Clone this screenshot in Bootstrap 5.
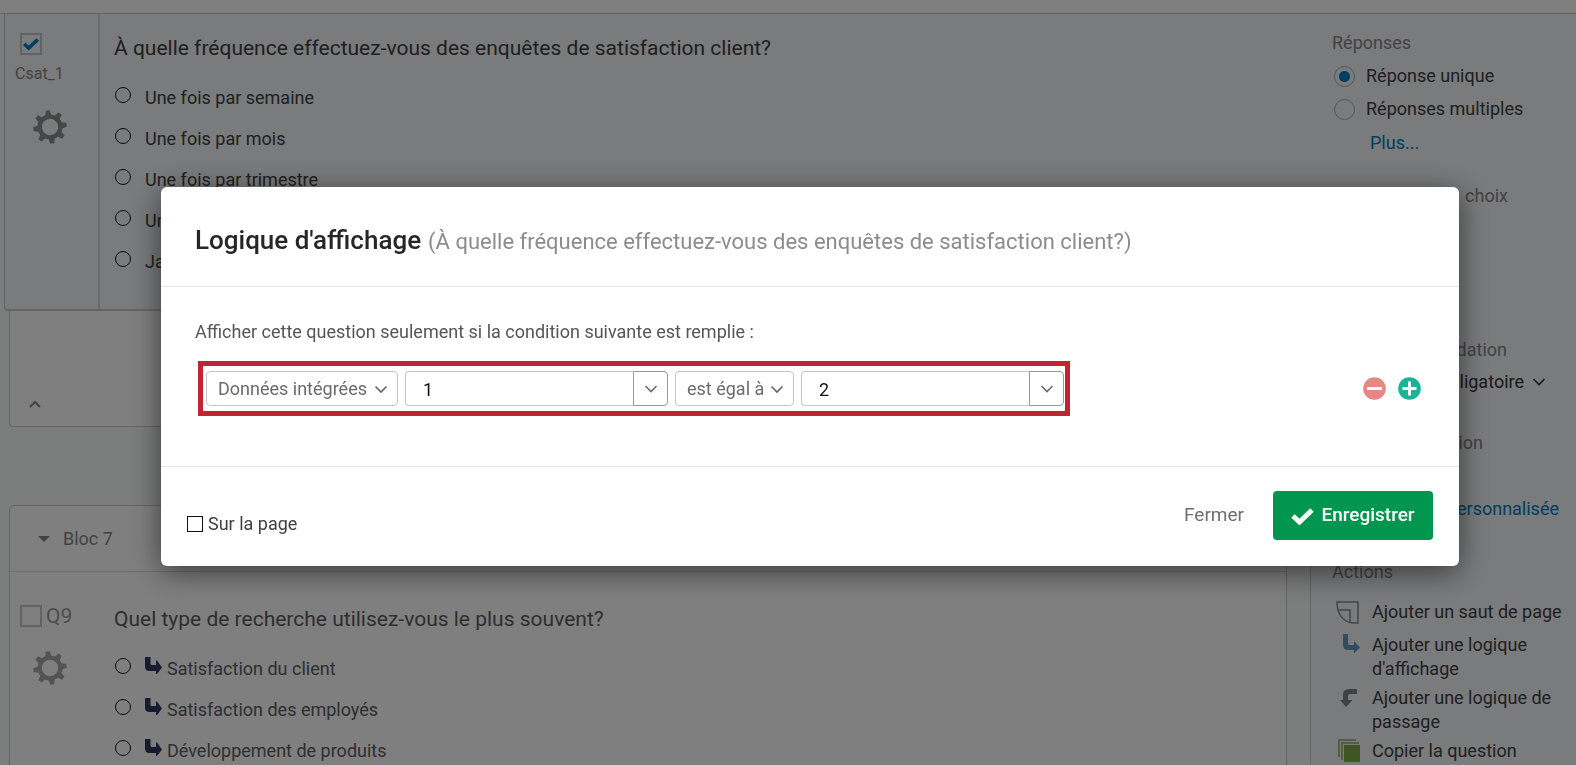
<!DOCTYPE html>
<html lang="fr">
<head>
<meta charset="utf-8">
<meta name="viewport" content="width=device-width, initial-scale=1">
<title>Logique d'affichage</title>
<link href="https://cdn.jsdelivr.net/npm/bootstrap@5.3.0/dist/css/bootstrap.min.css" rel="stylesheet">
<style>
  body { font-family: Roboto, "Liberation Sans", sans-serif; font-size: 18px; line-height: 24px; color: #404040; background: #f9fafa; height: 100vh; overflow: hidden; }
  .topstrip { height: 14px; background: #fff; border-bottom: 1px solid #cacaca; }
  .link-q { color: #007ac0; text-decoration: none; }
  .muted { color: #858585; }

  /* survey column */
  .survey { padding-left: 4px; min-width: 0; }
  .q-active { background: #f4f6f8; border: 1px solid #c8cacb; border-width: 0 0 2px 1px; border-bottom-left-radius: 4px; padding-bottom: 18px; margin-right: -1px; position: relative; }
  .q-side { width: 95px; flex: none; padding: 19px 0 0 15px; }
  .q-active .q-side { border-right: 2px solid #d2d4d5; margin-bottom: -18px; }
  .block-card { background: #fff; border: 1px solid #cacaca; margin: 0 23px 0 5px; }
  .block-end { border-top: 0; border-radius: 0 0 4px 4px; margin-bottom: 78px; padding: 80px 0 11px 16px; }
  .block-head { height: 66px; padding-left: 28px; gap: 13px; border-bottom: 1px solid #dcdcdc; }
  .q-title { font-size: 21px; line-height: 28px; margin-bottom: 24px; }
  .q-body { padding: 20px 0 0 14px; }
  .opt { height: 24px; min-height: 0; margin: 0 0 17px; padding: 0; display: flex; }
  .opt .form-check-input { width: 16px; height: 16px; margin: 1px 14px 0 1px; float: none; border: 1px solid #111; background-color: transparent; flex: none; }
  .opt svg { margin: 0 5px 0 0; flex: none; }
  .q-dim { color: #5c5c5c; }
  .box.form-check-input { width: 22px; height: 22px; margin: 0; border: 2px solid #c6c6c6; border-radius: 0; background-color: transparent; }
  .box.form-check-input:checked { background-size: 18px 18px; background-image: url("data:image/svg+xml,%3Csvg xmlns='http://www.w3.org/2000/svg' viewBox='0 0 20 20'%3E%3Cpath fill='none' stroke='%23007ac0' stroke-width='4' d='M2.5 10l5 4.5L17.5 5'/%3E%3C/svg%3E"); }
  .gear { display: block; margin: 24px 0 0 13px; padding: 0; border: 0; background: none; line-height: 0; color: #8c8c8c; }
  .csat { font-size: 16px; line-height: 24px; margin: 7px 0 0 -5px; }
  .q9 { gap: 4px; margin: 32px 0 0 10px; font-size: 21px; line-height: 24px; color: #9a9a9a; }
  .gear-9 { margin: 23px 0 0 23px; color: #a8a8a8; }
  .q9-body { padding: 33px 0 0 9px; }

  /* right panel */
  .panel { width: 266px; flex: none; background: #f4f6f8; border-left: 1px solid #cacaca; padding: 17px 0 0 21px; white-space: nowrap; }
  .panel h2 { font-size: 18px; line-height: 24px; font-weight: 400; margin: 0; color: #858585; }
  .panel-opt { margin: 9px 0 0; padding: 0; min-height: 24px; display: flex; align-items: center; gap: 11px; }
  .panel-opt .form-check-input { float: none; margin: 0 0 0 2px; width: 21px; height: 21px; border: 1px solid #aaa; background-color: transparent; }
  .panel-opt .form-check-input:checked { background-image: radial-gradient(circle, #007ac0 5px, transparent 6px); }
  .more { margin: 10px 0 0 38px; }
  .to-end { text-align: right; }
  .panel .p-choices { margin: 29px 68px 0 0; }
  .panel .p-valid { margin: 130px 69px 8px 0; }
  .panel .p-kind { margin: 37px 93px 0 0; }
  .p-custom { margin: 42px 17px 0 0; }
  .panel .p-actions { margin: 39px 0 16px; }
  .req { width: 214px; font-size: 18px; line-height: 24px; color: #333; }
  .act { display: flex; gap: 10px; margin-top: 5px; line-height: 24px; white-space: normal; color: #404040; text-decoration: none; }
  .act svg { flex: none; margin-left: 1px; }

  /* dialog */
  .modal { padding: 187px 117px 0 161px; overflow: hidden; }
  .modal-dialog { max-width: none; margin: 0; }
  .modal-content { border: 0; border-radius: 6px; box-shadow: 0 6px 30px rgba(0,0,0,.55); color: #555; }
  .modal-header { padding: 40px 34px 33px; border-color: #e6e6e6; justify-content: flex-start; gap: 7px; align-items: baseline; }
  .modal-title { font-size: 26px; line-height: 26px; font-weight: 500; color: #262626; white-space: nowrap; }
  .modal-sub { font-size: 22px; line-height: 20px; color: #8c8c8c; white-space: nowrap; }
  .modal-body { padding: 33px 35px 50px 34px; }
  .intro { margin-bottom: 17px; }
  .modal-footer { padding: 24px 26px 26px; border-color: #e6e6e6; }
  .modal-footer > * { margin: 0; }
  .rule { border: 5px solid #c32432; padding: 5px 1px 5px 3px; margin-left: 3px; gap: 7px; }
  .rule .form-select, .rule .form-control, .rule .btn { height: 35px; font-size: 18px; line-height: 24px; padding-top: 5px; padding-bottom: 4px; border-color: #c6c6c6; border-radius: 4px; color: #6b6b6b; }
  .rule .form-select { padding-left: 11px; padding-right: 28px; background-position: right 9px center; background-size: 14px 14px; background-image: url("data:image/svg+xml,%3Csvg xmlns='http://www.w3.org/2000/svg' viewBox='0 0 14 14'%3E%3Cpath fill='none' stroke='%23666' stroke-width='1.6' d='M1.500 4.500l5.500 5.500 5.500-5.500'/%3E%3C/svg%3E"); }
  .rule .sel-kind { width: 192px; }
  .rule .sel-op { width: 119px; }
  .rule .input-group { width: 263px; }
  .rule .form-control { color: #111; padding-left: 17px; border-right: 0; border-radius: 4px 0 0 4px; }
  .rule .input-group .btn { width: 35px; padding: 0; border-color: #999; line-height: 0; border-radius: 0 4px 4px 0; }
  .round { padding: 0; border: 0; background: none; line-height: 0; }
  .tools { gap: 12px; margin-right: 3px; }
  .on-page { gap: 5px; padding: 0; display: flex; align-items: center; color: #404040; margin-top: 17px; }
  .on-page .form-check-input { margin: 0 0 1px; float: none; width: 16px; height: 16px; border: 1px solid #111; border-radius: 0; }
  .btn-fermer { font-size: 19px; color: #6e6e6e; padding: 0 4px; }
  .btn-save { height: 49px; width: 160px; font-size: 19px; font-weight: 500; padding: 0; background: #009650; color: #fff; border: 0; border-radius: 4px; margin-left: 24px; gap: 7px; }
</style>
</head>
<body>
<svg width="0" height="0" class="position-absolute" aria-hidden="true">
  <symbol id="i-gear" viewBox="0 0 34 34"><g fill="currentColor" transform="rotate(-8 17 17)"><path fill-rule="evenodd" d="M17 4.500a12.500 12.500 0 1 0 0 25a12.500 12.500 0 1 0 0-25zM17 8.800a8.200 8.200 0 1 1 0 16.400a8.200 8.200 0 1 1 0-16.400z"/><path d="M13.800 6l1.200-5.700h4l1.200 5.700zM13.800 28l1.200 5.700h4l1.200-5.700zM6 13.800l-5.700 1.200v4l5.700 1.200zM28 13.800l5.700 1.200v4l-5.700 1.200z"/><path transform="rotate(45 17 17)" d="M13.800 6l1.200-5.700h4l1.200 5.700zM13.800 28l1.200 5.700h4l1.200-5.700zM6 13.800l-5.700 1.200v4l5.700 1.200zM28 13.800l5.700 1.200v4l-5.700 1.200z"/></g></symbol>
  <symbol id="i-branch" viewBox="0 0 17 18"><path fill="currentColor" d="M0 0h5.500v6.500q0 1.500 1.500 1.500h4V3.500h1l5 7-5 6.500h-1V14H4.500Q0 14 0 9.500z"/></symbol>
  <symbol id="i-down" viewBox="0 0 14 14"><path fill="none" stroke="currentColor" stroke-width="1.600" d="M1.500 4l5.500 5.500 5.500-5.500"/></symbol>
</svg>

<div class="topstrip"></div>
<div class="d-flex align-items-stretch">
  <main class="survey flex-grow-1">
    <section class="q-active d-flex">
      <div class="q-side">
        <input class="form-check-input box d-block" type="checkbox" id="csat" checked>
        <label class="muted csat d-block" for="csat">Csat_1</label>
        <button class="gear" aria-label="Options de la question"><svg width="34" height="34"><use href="#i-gear"/></svg></button>
      </div>
      <div class="q-body">
        <div class="q-title">À quelle fréquence effectuez-vous des enquêtes de satisfaction client?</div>
        <div class="form-check opt"><input class="form-check-input" type="radio" name="f" id="f1"><label for="f1">Une fois par semaine</label></div>
        <div class="form-check opt"><input class="form-check-input" type="radio" name="f" id="f2"><label for="f2">Une fois par mois</label></div>
        <div class="form-check opt"><input class="form-check-input" type="radio" name="f" id="f3"><label for="f3">Une fois par trimestre</label></div>
        <div class="form-check opt"><input class="form-check-input" type="radio" name="f" id="f4"><label for="f4">Une fois par an</label></div>
        <div class="form-check opt"><input class="form-check-input" type="radio" name="f" id="f5"><label for="f5">Jamais</label></div>
      </div>
    </section>
    <section class="block-card block-end muted"><svg width="18" height="18" viewBox="0 0 18 18"><path fill="none" stroke="currentColor" stroke-width="2" d="M4 12l5-5 5 5"/></svg></section>
    <section class="block-card rounded-top q-dim">
      <div class="block-head d-flex align-items-center muted"><svg width="12" height="6"><path fill="currentColor" d="M0 0h12L6 6z"/></svg><span>Bloc 7</span></div>
      <div class="d-flex">
        <div class="q-side ps-0 pt-0">
          <div class="q9 d-flex align-items-center"><input class="form-check-input box" type="checkbox" id="q9"><label for="q9">Q9</label></div>
          <button class="gear gear-9" aria-label="Options de la question"><svg width="34" height="34"><use href="#i-gear"/></svg></button>
        </div>
        <div class="q9-body">
          <div class="q-title">Quel type de recherche utilisez-vous le plus souvent?</div>
          <div class="form-check opt"><input class="form-check-input" type="radio" name="r" id="r1"><svg width="17" height="18" color="#303561"><use href="#i-branch"/></svg><label for="r1">Satisfaction du client</label></div>
          <div class="form-check opt"><input class="form-check-input" type="radio" name="r" id="r2"><svg width="17" height="18" color="#303561"><use href="#i-branch"/></svg><label for="r2">Satisfaction des employés</label></div>
          <div class="form-check opt"><input class="form-check-input" type="radio" name="r" id="r3"><svg width="17" height="18" color="#303561"><use href="#i-branch"/></svg><label for="r3">Développement de produits</label></div>
        </div>
      </div>
    </section>
  </main>
  <aside class="panel">
    <h2>Réponses</h2>
    <div class="form-check panel-opt"><input class="form-check-input" type="radio" name="n" id="n1" checked><label for="n1">Réponse unique</label></div>
    <div class="form-check panel-opt"><input class="form-check-input" type="radio" name="n" id="n2"><label for="n2">Réponses multiples</label></div>
    <a class="link-q d-block more" href="#">Plus...</a>
    <h2 class="to-end p-choices">Format &nbsp; choix</h2>
    <h2 class="to-end p-valid">Type de validation</h2>
    <button class="btn p-0 border-0 d-flex align-items-center justify-content-end gap-2 req">Non obligatoire <svg width="14" height="14"><use href="#i-down"/></svg></button>
    <h2 class="to-end p-kind">Type d'option</h2>
    <a class="link-q d-block to-end p-custom" href="#">Validation personnalisée</a>
    <h2 class="p-actions">Actions</h2>
    <a class="act" href="#"><svg width="29" height="28" viewBox="0 0 29 28"><path fill="none" stroke="#8c8c8c" stroke-width="1.500" d="M4 2h21v21h-5C10 22 4 14 4 2zM5 10h12v12"/></svg>Ajouter un saut de page</a>
    <a class="act" href="#"><svg width="29" height="24" viewBox="0 -1 29 24"><path fill="#6a97c5" d="M10 0h5v9q0 2 2 2h4V7l6 6.500-6 6v-3.500h-6q-5 0-5-5z"/></svg>Ajouter une logique d'affichage</a>
    <a class="act" href="#"><svg width="29" height="24" viewBox="0 -3 29 24"><path fill="#808080" d="M24 0v5h-7q-2 0-2 2v4h4.500L13 18 7 11h3V6q0-6 6-6z"/></svg>Ajouter une logique de passage</a>
    <a class="act" href="#"><svg width="29" height="24" viewBox="0 0 29 24"><path fill="none" stroke="#8fae52" stroke-width="1.500" d="M6 18V1h17M9 21V4h17"/><path fill="#80ad45" d="M11 6h16v17H11z"/></svg>Copier la question</a>
  </aside>
</div>

<div class="modal-backdrop show"></div>
<div class="modal d-block" role="dialog" aria-labelledby="mt">
  <div class="modal-dialog">
    <div class="modal-content">
      <div class="modal-header">
        <h1 class="modal-title" id="mt">Logique d'affichage</h1>
        <span class="modal-sub">(À quelle fréquence effectuez-vous des enquêtes de satisfaction client?)</span>
      </div>
      <div class="modal-body">
        <p class="intro">Afficher cette question seulement si la condition suivante est remplie :</p>
        <div class="d-flex align-items-center justify-content-between">
          <div class="rule d-flex">
            <select class="form-select sel-kind" aria-label="Source"><option>Données intégrées</option></select>
            <div class="input-group flex-nowrap"><input class="form-control" value="1" aria-label="Champ"><button class="btn" aria-label="Choisir un champ"><svg width="14" height="14"><use href="#i-down"/></svg></button></div>
            <select class="form-select sel-op" aria-label="Opérateur"><option>est égal à</option></select>
            <div class="input-group flex-nowrap"><input class="form-control" value="2" aria-label="Valeur"><button class="btn" aria-label="Choisir une valeur"><svg width="14" height="14"><use href="#i-down"/></svg></button></div>
          </div>
          <div class="d-flex tools">
            <button class="round" aria-label="Supprimer"><svg width="23" height="23"><circle cx="11.500" cy="11.500" r="11.300" fill="#e58784"/><path stroke="#fff" stroke-width="3" d="M4 11.500h15"/></svg></button>
            <button class="round" aria-label="Ajouter"><svg width="23" height="23"><circle cx="11.500" cy="11.500" r="11.300" fill="#1ab394"/><path stroke="#fff" stroke-width="3" d="M4.500 11.500h14M11.500 4.500v14"/></svg></button>
          </div>
        </div>
      </div>
      <div class="modal-footer justify-content-between">
        <div class="form-check on-page"><input class="form-check-input" type="checkbox" id="op"><label for="op">Sur la page</label></div>
        <div class="d-flex align-items-center">
          <button class="btn btn-fermer">Fermer</button>
          <button class="btn btn-save d-flex align-items-center justify-content-center"><svg width="23" height="18" viewBox="0 0 23 18"><path fill="none" stroke="#fff" stroke-width="5" d="M2 9l6.500 6L21 3"/></svg><span>Enregistrer</span></button>
        </div>
      </div>
    </div>
  </div>
</div>
<script src="https://cdn.jsdelivr.net/npm/bootstrap@5.3.0/dist/js/bootstrap.bundle.min.js"></script>
</body>
</html>
